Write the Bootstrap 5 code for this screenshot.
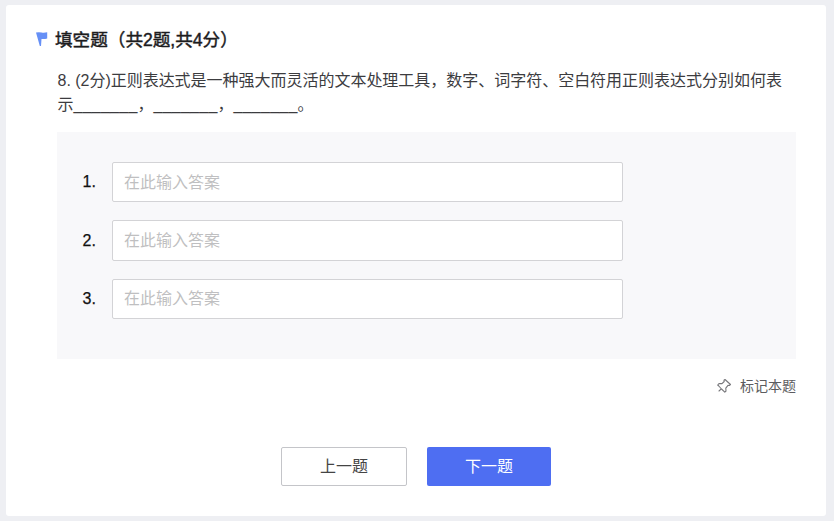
<!DOCTYPE html>
<html lang="zh-CN">
<head>
<meta charset="utf-8">
<meta name="viewport" content="width=device-width, initial-scale=1">
<title>填空题</title>
<link href="https://cdn.jsdelivr.net/npm/bootstrap@5.3.0/dist/css/bootstrap.min.css" rel="stylesheet">
<style>
body{background:#eeeff3;font-family:"Liberation Sans","Noto Sans CJK SC",sans-serif;font-size:16px;color:#3c3c3f;overflow:hidden}
.sheet{margin:5px 8px 0 6px;height:511px;background:#fff;border-radius:3px;padding:22px 30px 0}
.flag{width:12px;height:16px;margin-right:7px}
.title{font-size:17.6px;line-height:26px;font-weight:400;color:#1c1c1e;-webkit-text-stroke:.45px #1c1c1e}
.question{margin:16px 0 0 21.5px;line-height:24px;letter-spacing:-.02px}
.blank{letter-spacing:.25px}
.answers{margin:15px 0 0 21px;height:227px;background:#f8f8fa;padding:30px 25px 0;gap:18px}
.num{width:30px;padding-left:.6px;color:#111;-webkit-text-stroke:.25px #111}
.answers .form-control{width:511px;height:40.4px;border:1px solid #d3d3d6;border-radius:2px;padding:1px 11px 0;font-size:16px;color:#333}
.answers .form-control::placeholder{color:#bfbfc1}
.marker{font-size:14px;line-height:20px;margin-top:17px;color:#5c5c60;gap:8px}
.pin{width:16px;height:16px}
.pager{margin-top:51px;gap:20px}
.pager .btn{height:39px;border-radius:2px;font-size:16px;padding:0}
.prev{width:126px;border:1px solid #c4c5c9;color:#444;background:#fff}
.next{width:124px;background:#4e6ef2;color:#fff}
</style>
</head>
<body>
<main class="sheet">
<h1 class="title d-flex align-items-center mb-0"><svg class="flag" viewBox="0 0 12 16"><path fill="#6690f6" d="M0 .5q3-.6 5.500 0t5.700-.2v6.200q-3 .8-5.700.4L5 14H3.800z"/></svg>填空题（共2题,共4分）</h1>
<p class="question mb-0">8. (2分)正则表达式是一种强大而灵活的文本处理工具，数字、词字符、空白符用正则表达式分别如何表示<span class="blank">_______</span>，<span class="blank">_______</span>，<span class="blank">_______</span>。</p>
<section class="answers d-flex flex-column">
<label class="d-flex align-items-center"><span class="num">1.</span><input class="form-control" placeholder="在此输入答案"></label>
<label class="d-flex align-items-center"><span class="num">2.</span><input class="form-control" placeholder="在此输入答案"></label>
<label class="d-flex align-items-center"><span class="num">3.</span><input class="form-control" placeholder="在此输入答案"></label>
</section>
<div class="marker d-flex justify-content-end align-items-center"><svg class="pin" viewBox="0 0 16 16" fill="none" stroke="#77777b" stroke-width="1.100" stroke-linejoin="round" stroke-linecap="round"><path d="M9 1.500 14.500 6.500 13.300 7.500 12 7.400 9.800 10.200 10 13 8.800 14.200 5.500 11 2.800 8 1.700 7 3 5.600 6 5.600 8.200 3.500 8 2.300zM5.300 10.800 3 13"/></svg>标记本题</div>
<div class="pager d-flex justify-content-center"><button class="btn prev">上一题</button><button class="btn next">下一题</button></div>
</main>
<script src="https://cdn.jsdelivr.net/npm/bootstrap@5.3.0/dist/js/bootstrap.bundle.min.js"></script>
</body>
</html>
